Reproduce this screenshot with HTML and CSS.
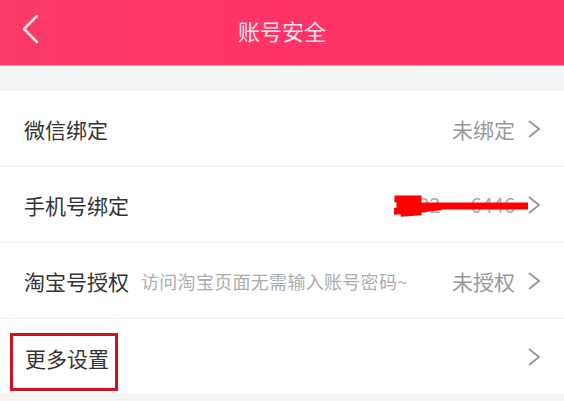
FILE: index.html
```html
<!DOCTYPE html>
<html lang="zh">
<head>
<meta charset="utf-8">
<link rel="stylesheet" href="styles.css">
</head>
<body>
<div class="page">
  <header class="bar">
    <svg class="back" width="20" height="30" viewBox="0 0 20 30"><path d="M17 2 L4 15 L17 28" fill="none" stroke="#fff" stroke-width="2.6" stroke-linecap="round" stroke-linejoin="round" opacity="0.85"/></svg>
    <h1 class="title">账号安全</h1>
  </header>
  <div class="gap"></div>
  <ul class="list">
    <li class="row">
      <span class="label">微信绑定</span>
      <span class="value">未绑定</span>
      <svg class="arrow" width="14" height="20" viewBox="0 0 14 20"><path d="M2 2 L12 10 L2 18" fill="none" stroke="#999" stroke-width="2"/></svg>
    </li>
    <li class="row">
      <span class="label">手机号绑定</span>
      <span class="value phone"><span class="num">132</span>6446
        <svg class="scribble" width="134" height="22" viewBox="0 0 134 22"><path d="M4 4 L24 4 M6 11 L132 11 M3 16 L26 14 L44 12 M10 18 L24 17" stroke="#f00" stroke-width="7" fill="none" stroke-linecap="square"/></svg>
      </span>
      <svg class="arrow" width="14" height="20" viewBox="0 0 14 20"><path d="M2 2 L12 10 L2 18" fill="none" stroke="#999" stroke-width="2"/></svg>
    </li>
    <li class="row">
      <span class="label">淘宝号授权</span>
      <span class="hint">访问淘宝页面无需输入账号密码~</span>
      <span class="value">未授权</span>
      <svg class="arrow" width="14" height="20" viewBox="0 0 14 20"><path d="M2 2 L12 10 L2 18" fill="none" stroke="#999" stroke-width="2"/></svg>
    </li>
    <li class="row">
      <span class="label boxed">更多设置</span>
      <svg class="arrow push" width="14" height="20" viewBox="0 0 14 20"><path d="M2 2 L12 10 L2 18" fill="none" stroke="#999" stroke-width="2"/></svg>
    </li>
  </ul>
</div>
</body>
</html>
```

FILE: styles.css
```css
* { box-sizing: border-box; margin: 0; padding: 0; }
html, body { width: 564px; height: 401px; overflow: hidden; }
body {
  background: #f5f5f5;
  font-family: "Noto Sans CJK SC", "Noto Sans", sans-serif;
}
.bar {
  height: 66px;
  background: linear-gradient(90deg, #fb3a68 0%, #ff3366 50%, #fd3467 100%);
  border-bottom: 1px solid #fb8fae;
  display: flex;
  align-items: center;
  justify-content: center;
  position: relative;
}
.back { position: absolute; left: 20px; top: 14px; }
.title {
  font-size: 22px;
  font-weight: 400;
  color: #ffe6ee;
  margin-top: -5px;
}
.gap { height: 25px; }
.list { list-style: none; background: #fff; }
.row {
  height: 76px;
  display: flex;
  align-items: center;
  padding: 0 22px 0 24px;
  border-bottom: 1px solid #f0f0f0;
  position: relative;
}
.row:last-child { height: 75px; border-bottom: none; }
.label { font-size: 21px; color: #333; }
.hint { font-size: 18px; color: #adadad; margin-left: 12px; letter-spacing: 0.3px; }
.value {
  margin-left: auto;
  font-size: 21px;
  color: #999;
  position: relative;
}
.phone { font-size: 20px; color: #aaa; }
.num { margin-right: 30px; }
.scribble { position: absolute; right: -13px; top: 50%; margin-top: -10px; }
.arrow { margin-left: 12px; margin-right: 1px; flex: none; }
.arrow.push { margin-left: auto; }
.boxed {
  margin-left: -14px;
  margin-top: 10px;
  width: 108px;
  height: 58px;
  padding: 0 0 8px 12px;
  border: 3px solid #d0121f;
  display: flex;
  align-items: center;
}
```
